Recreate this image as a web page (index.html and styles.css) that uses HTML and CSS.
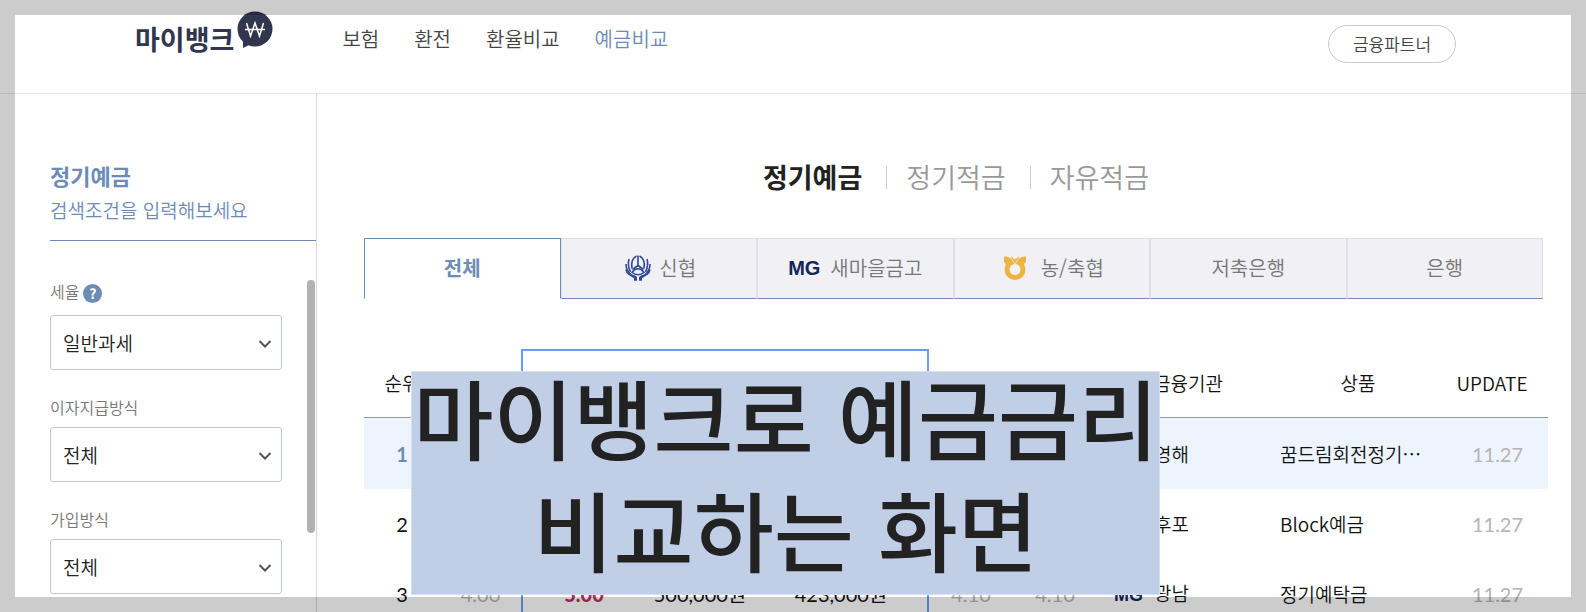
FILE: index.html
```html
<!DOCTYPE html>
<html lang="ko">
<head>
<meta charset="utf-8">
<meta name="viewport" content="width=device-width, initial-scale=1">
<title>마이뱅크 - 예금비교</title>
<link rel="stylesheet" href="styles.css">
</head>
<body>
<div class="app">
  <header class="header">
    <a class="logo" href="#">
      <span class="logo-text">마이뱅크</span>
      <svg class="logo-mark" viewBox="0 0 36 38" aria-hidden="true">
        <circle cx="18" cy="18" r="17.500" fill="#31364f"/>
        <path d="M6 27v10l8-4z" fill="#31364f"/>
        <path d="M9.500 12l4 13 4.500-13 4.500 13 4-13M8 18.500h20" fill="none" stroke="#fff" stroke-width="1.500"/>
      </svg>
    </a>
    <nav class="gnb">
      <a href="#">보험</a>
      <a href="#">환전</a>
      <a href="#">환율비교</a>
      <a class="on" href="#">예금비교</a>
    </nav>
    <button class="partner" type="button">금융파트너</button>
  </header>

  <div class="body">
    <aside class="side">
      <div class="side-head">
        <h2>정기예금</h2>
        <p>검색조건을 입력해보세요</p>
      </div>
      <form class="filters">
        <div class="field">
          <div class="label-row with-help">
            <label for="tax">세율</label>
            <button class="help" type="button" aria-label="도움말">?</button>
          </div>
          <div class="select">
            <select id="tax"><option>일반과세</option></select>
            <svg viewBox="0 0 14 10" aria-hidden="true"><path d="M1.500 2l5.500 5.500L12.500 2"/></svg>
          </div>
        </div>
        <div class="field">
          <div class="label-row"><label for="interest">이자지급방식</label></div>
          <div class="select">
            <select id="interest"><option>전체</option></select>
            <svg viewBox="0 0 14 10" aria-hidden="true"><path d="M1.500 2l5.500 5.500L12.500 2"/></svg>
          </div>
        </div>
        <div class="field">
          <div class="label-row"><label for="join">가입방식</label></div>
          <div class="select">
            <select id="join"><option>전체</option></select>
            <svg viewBox="0 0 14 10" aria-hidden="true"><path d="M1.500 2l5.500 5.500L12.500 2"/></svg>
          </div>
        </div>
        <span class="thumb"></span>
      </form>
    </aside>

    <main class="main">
      <nav class="kinds">
        <a class="on" href="#">정기예금</a>
        <a href="#">정기적금</a>
        <a href="#">자유적금</a>
      </nav>

      <div class="tabs">
        <button class="tab on" type="button">전체</button>
        <button class="tab cu-tab" type="button">
          <svg class="cu" viewBox="0 0 26 26" aria-hidden="true">
            <g fill="none" stroke="#2f4795" stroke-width="1.600">
              <path d="M13 .5v10M13 10.500L7.500 14.500M13 10.500l5.500 4"/>
              <path d="M11.500 1C7.500 3 6 8 7 13.500M14.500 1C18.500 3 20 8 19 13.500"/>
              <path d="M7 17.500c3.500-5 8.500-5 12 0-3.500 3-8.500 3-12 0z"/>
              <path d="M4 4c-1.500 5-.5 9 1.500 13M22 4c1.500 5 .5 9-1.500 13"/>
              <path d="M1 9c0 5 2 8 4.500 10M25 9c0 5-2 8-4.500 10"/>
              <path d="M1 14.500C2 19 5 20 9 21.500M25 14.500C24 19 21 20 17 21.500"/>
            </g>
            <path d="M5 18c2 2.500 7 2 7 5v2.800H9V23c-2-.5-3.500-2-4-5zM21 18c-2 2.500-7 2-7 5v2.800h3V23c2-.5 3.500-2 4-5z" fill="#2f4795"/>
          </svg>
          신협
        </button>
        <button class="tab mg-tab" type="button"><span class="mg">MG</span>새마을금고</button>
        <button class="tab nh-tab" type="button">
          <svg class="nh" viewBox="0 0 22 24" aria-hidden="true">
            <path d="M0 .5C3 .5 5 1 6.500 2.500L7.500 .5 11 4l3.500-3.500 1 2C17 1 19 .5 22 .5V6l-3 3H3L0 6z" fill="#ecb440"/>
            <circle cx="11" cy="13.500" r="8" fill="#f1f0f5" stroke="#ecb440" stroke-width="5"/>
            <path d="M7 1.500l4 7 4-7" fill="none" stroke="#f1f0f5" stroke-width=".7"/>
          </svg>
          농/축협
        </button>
        <button class="tab" type="button">저축은행</button>
        <button class="tab" type="button">은행</button>
      </div>

      <div class="board">
        <table class="rates">
          <colgroup>
            <col class="c-rank"><col class="c-base"><col class="c-max"><col class="c-won"><col class="c-won2"><col class="c-r1"><col class="c-r2"><col class="c-org"><col class="c-item"><col class="c-date">
          </colgroup>
          <thead>
            <tr>
              <th>순위</th><th></th><th class="pick-l pick-t"></th><th class="pick-t"></th><th class="pick-r pick-t"></th><th></th><th></th><th class="org">금융기관</th><th>상품</th><th>UPDATE</th>
            </tr>
          </thead>
          <tbody>
            <tr class="first">
              <td class="rank">1</td><td></td><td class="pick-l"></td><td></td><td class="pick-r"></td><td></td><td></td>
              <td class="org">영해</td><td class="item">꿈드림회전정기⋯</td><td class="date">11.27</td>
            </tr>
            <tr>
              <td class="rank">2</td><td></td><td class="pick-l"></td><td></td><td class="pick-r"></td><td></td><td></td>
              <td class="org">후포</td><td class="item">Block예금</td><td class="date">11.27</td>
            </tr>
            <tr>
              <td class="rank">3</td><td class="dim">4.00</td><td class="pick-l best">5.00</td><td>500,000원</td><td class="pick-r">423,000원</td><td class="dim">4.10</td><td class="dim">4.10</td>
              <td class="org"><span class="mg small">MG</span>광남</td><td class="item">정기예탁금</td><td class="date">11.27</td>
            </tr>
          </tbody>
        </table>
        <p class="caption"><span>마이뱅크로 예금금리</span><span>비교하는 화면</span></p>
      </div>
    </main>
  </div>
</div>
</body>
</html>
```
FILE: styles.css
```css
* { box-sizing: border-box; }

body {
  margin: 0;
  background: #fff;
  color: #222;
  font-family: "Noto Sans CJK KR", sans-serif;
  font-weight: 350;
  font-size: 19px;
  line-height: 28px;
}

a { color: inherit; text-decoration: none; }
button, select { font: inherit; color: inherit; }
h2, p { margin: 0; }

/* shaded frame around the window */
body::after {
  content: "";
  position: fixed;
  inset: 0;
  border: 15px solid rgba(0, 0, 0, .2);
  pointer-events: none;
}

.app {
  display: flex;
  flex-direction: column;
  height: 100vh;
  overflow: hidden;
}

.header {
  display: flex;
  align-items: flex-start;
  flex: none;
  height: 94px;
  padding: 11px 130px 0 135px;
  border-bottom: 1px solid #e8e8e8;
}
.logo { display: flex; gap: 3px; color: #31364f; }
.logo-text { padding-top: 8px; font-size: 27px; font-weight: 700; line-height: 40px; }
.logo-mark { width: 36px; height: 38px; }
.gnb { display: flex; gap: 35px; margin-left: 69px; padding-top: 14px; font-size: 20px; color: #444; }
.gnb .on { color: #6d8cb5; }
.partner {
  width: 128px;
  height: 38px;
  margin: 14px 0 0 auto;
  padding: 0;
  border: 1px solid #ccc;
  border-radius: 19px;
  background: none;
  color: #444;
  font-size: 17px;
}

.body { display: flex; flex: 1; min-height: 0; }

.side {
  flex: none;
  width: 317px;
  padding: 65px 0 0 50px;
  border-right: 1px solid #d8d8d8;
}
.side-head { padding-bottom: 15px; border-bottom: 1px solid #6d8cb5; color: #6d8cb5; }
.side-head h2 { margin-bottom: 4px; font-size: 22px; font-weight: 700; line-height: 32px; }
.side-head p { line-height: 30px; }

.filters {
  position: relative;
  display: flex;
  flex-direction: column;
  gap: 23px;
  padding: 40px 34px 0 0;
}
.label-row {
  display: flex;
  align-items: center;
  gap: 4px;
  height: 28px;
  margin-bottom: 6px;
  color: #777;
  font-size: 16px;
}
.label-row.with-help { align-items: flex-start; }
.with-help label { line-height: 20px; }
.help {
  width: 19px;
  height: 19px;
  margin-top: 3px;
  padding: 0;
  border: 0;
  border-radius: 50%;
  background: #6d8cb5;
  color: #fff;
  font-size: 14px;
  font-weight: 700;
  line-height: 19px;
}
.select { position: relative; }
.select select {
  display: block;
  width: 100%;
  height: 55px;
  padding: 0 12px;
  border: 1px solid #c0c6d6;
  border-radius: 3px;
  background: #fff;
  appearance: none;
}
.select svg {
  position: absolute;
  top: 24px;
  right: 10px;
  width: 14px;
  height: 10px;
  fill: none;
  stroke: #555;
  stroke-width: 2;
  pointer-events: none;
}
.thumb {
  position: absolute;
  top: 39px;
  right: 1px;
  width: 8px;
  height: 253px;
  border-radius: 4px;
  background: #b1b1b1;
}

.main { flex: 1; min-width: 0; padding: 63px 38px 0 47px; }

.kinds {
  display: flex;
  justify-content: center;
  align-items: center;
  font-size: 27px;
  line-height: 40px;
  color: #999;
}
.kinds a { display: flex; align-items: center; }
.kinds a + a::before {
  content: "";
  width: 1px;
  height: 23px;
  margin: 0 19px 0 24px;
  background: #ccc;
}
.kinds .on { color: #222; font-weight: 700; }

.tabs {
  display: grid;
  grid-template-columns: repeat(6, 1fr);
  margin: 41px 5px 0 0;
}
.tab {
  display: flex;
  justify-content: center;
  align-items: center;
  gap: 8px;
  height: 61px;
  padding: 0 0 1px;
  border: 1px solid #e0dfe8;
  border-bottom-color: #6d8cb5;
  background: #f1f0f5;
  color: #777;
  font-size: 20px;
}
.cu-tab { padding-left: 4px; }
.mg-tab { gap: 10px; }
.nh-tab { gap: 15px; padding-left: 4px; }
.tab.on {
  border-color: #6d8cb5;
  border-bottom-color: #fff;
  background: #fff;
  color: #6d8cb5;
  font-weight: 700;
}
.cu { width: 26px; height: 26px; }
.nh { width: 22px; height: 24px; }
.mg { color: #16265a; font: 700 20px/28px "Liberation Sans", sans-serif; }
.mg.small { margin-right: 11px; font-size: 18px; }

.board { position: relative; margin-top: 50px; }
.rates {
  width: 100%;
  table-layout: fixed;
  border-collapse: separate;
  border-spacing: 0;
  color: #111;
  white-space: nowrap;
}
.c-rank { width: 76px; }
.c-base { width: 81px; }
.c-max { width: 124px; }
.c-won { width: 110px; }
.c-won2 { width: 174px; }
.c-r1 { width: 84px; }
.c-r2 { width: 84px; }
.c-org { width: 183px; }
.c-item { width: 156px; }
.c-date { width: 112px; }
.rates th, .rates td { padding: 0; font-weight: 350; text-align: center; }
.rates th { height: 69px; border-bottom: 1px solid #999; }
.rates td { height: 70px; font-family: Lato, "Noto Sans CJK KR", sans-serif; font-size: 20px; font-weight: 400; }
.rates .first td { height: 71px; background: #edf4fd; }
.rates .first .rank { color: #6d8cb5; font-weight: 700; }
.rates .pick-l { border-left: 2px solid #659df7; }
.rates .pick-r { border-right: 2px solid #659df7; }
.rates .pick-t { border-top: 2px solid #659df7; }
.rates .dim { color: #b5b5b5; }
.rates .date { padding-left: 11px; color: #b5b5b5; }
.rates .best { color: #bd2f5d; font-weight: 900; }
.rates td.org, .rates td.item {
  font-family: "Noto Sans CJK KR", sans-serif;
  font-size: 19px;
  font-weight: 350;
}
.rates td.item { text-align: left; }
.rates td.org { padding-right: 91px; text-align: right; }
.rates th.org { padding-right: 57px; text-align: right; }

.caption {
  position: absolute;
  top: 22px;
  left: 4%;
  display: flex;
  flex-direction: column;
  gap: 24px;
  width: 749px;
  height: 224px;
  border: 1px solid #d5e0f0;
  background: #c0cfe6;
  color: #222;
  font-size: 87px;
  font-weight: 500;
  line-height: 88px;
  text-align: center;
  white-space: nowrap;
}
```
